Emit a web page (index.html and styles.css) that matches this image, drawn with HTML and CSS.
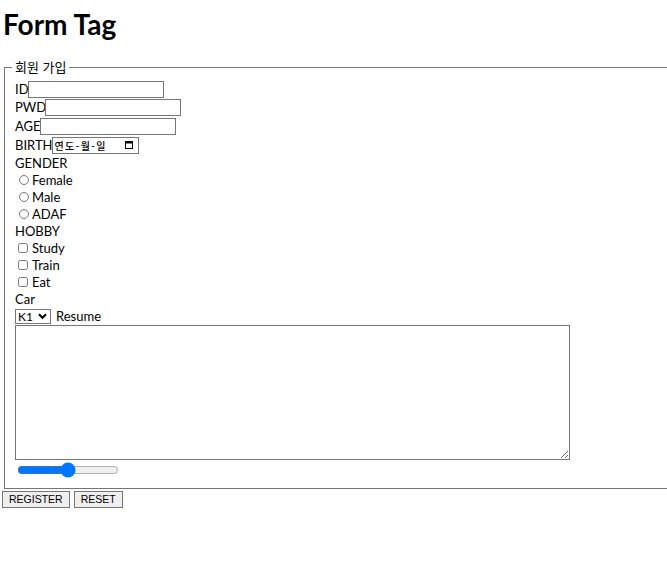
FILE: index.html
```html
<!DOCTYPE html>
<html lang="ko">
<head>
<meta charset="utf-8">
<title>Form Tag</title>
<link rel="stylesheet" href="styles.css">
</head>
<body>
<h1 class="title">Form Tag</h1>
<form class="form">
  <fieldset class="box">
    <legend class="legend">회원 가입</legend>
    <div class="line-in"><label class="lbl" for="id">ID</label><input class="text" id="id" type="text"></div>
    <div class="line-in"><label class="lbl" for="pwd">PWD</label><input class="text" id="pwd" type="password"></div>
    <div class="line-in"><label class="lbl" for="age">AGE</label><input class="text" id="age" type="text"></div>
    <div class="line-in"><label class="lbl">BIRTH</label><div class="date"><span class="date-text">연도-월-일</span><svg class="cal" width="8" height="8" viewBox="0 0 8 8"><rect x="0.5" y="0.5" width="7" height="7" fill="none" stroke="#000" stroke-width="1"/><rect x="0" y="0" width="8" height="2.5" fill="#000"/></svg></div></div>
    <div class="line">GENDER</div>
    <label class="line"><input class="radio" type="radio" name="g">Female</label>
    <label class="line"><input class="radio" type="radio" name="g">Male</label>
    <label class="line"><input class="radio" type="radio" name="g">ADAF</label>
    <div class="line">HOBBY</div>
    <label class="line"><input class="check" type="checkbox">Study</label>
    <label class="line"><input class="check" type="checkbox">Train</label>
    <label class="line"><input class="check" type="checkbox">Eat</label>
    <div class="line">Car</div>
    <div class="line-sel"><span class="sel-wrap"><select class="sel"><option>K1</option><option>K3</option><option>K5</option></select><svg class="chev" width="9" height="7" viewBox="0 0 9 7"><path d="M1 1.3 L4.5 4.8 L8 1.3" fill="none" stroke="#000" stroke-width="2.1"/></svg></span><span class="resume">Resume</span></div>
    <textarea class="area"></textarea>
    <input class="range" type="range" min="0" max="100" value="50">
  </fieldset>
  <div class="buttons">
    <button class="btn" type="submit">REGISTER</button>
    <button class="btn" type="reset">RESET</button>
  </div>
</form>
</body>
</html>
```
FILE: styles.css
```css
html, body {
  margin: 0;
  padding: 0;
}
body {
  padding: 0 0 0 2px;
  font-family: Lato, "Noto Sans CJK KR", sans-serif;
  font-size: 13px;
  color: #000;
  background: #fff;
  overflow: hidden;
}
.title {
  font-family: Lato, sans-serif;
  font-weight: 700;
  font-size: 28px;
  line-height: 34px;
  margin: 7px 0 17px 1px;
}
.form {
  margin: 0;
}
.box {
  margin: 0 0 0 2px;
  border: 1px solid #767676;
  border-right: 0;
  padding: 4px 10px 10px 10px;
  min-width: 0;
}
.legend {
  font-family: "Noto Sans CJK KR", Lato, sans-serif;
  font-size: 13px;
  line-height: 18px;
  padding: 0 3px;
  margin-left: -3px;
}
.line-in {
  height: 18.67px;
  display: flex;
  align-items: center;
}
.line {
  height: 17px;
  display: flex;
  align-items: center;
  line-height: 17px;
}
.lbl {
  line-height: 17px;
  margin-right: -1px;
}
.text {
  box-sizing: border-box;
  width: 136px;
  height: 17px;
  margin: 0;
  padding: 0 2px;
  border: 1px solid #767676;
  border-radius: 0;
  font-size: 11px;
}
.date {
  box-sizing: border-box;
  width: 87px;
  height: 17px;
  border: 1px solid #767676;
  display: flex;
  align-items: center;
  padding: 0 5px 0 2px;
}
.date-text {
  font-family: "Noto Sans CJK KR", sans-serif;
  font-size: 10px;
  font-weight: 500;
  letter-spacing: 1.4px;
  line-height: 15px;
  flex: 1;
}
.cal {
  display: block;
}
.radio {
  width: 10px;
  height: 10px;
  margin: 0 3px 0 4px;
}
.check {
  width: 10px;
  height: 10px;
  margin: 0 4px 0 3px;
}
.line-sel {
  height: 17.33px;
  display: flex;
  align-items: center;
}
.sel-wrap {
  position: relative;
  display: block;
  width: 36px;
  height: 15px;
}
.sel {
  -webkit-appearance: none;
  appearance: none;
  box-sizing: border-box;
  display: block;
  width: 36px;
  height: 15px;
  margin: 0;
  padding: 0 0 0 2px;
  border: 1px solid #767676;
  border-radius: 0;
  font-family: Lato, sans-serif;
  font-size: 12px;
  line-height: 13px;
  background: #fff;
  color: #000;
}
.chev {
  position: absolute;
  right: 4px;
  top: 4px;
  pointer-events: none;
}
.resume {
  margin-left: 5px;
}
.area {
  display: block;
  box-sizing: border-box;
  width: 555px;
  height: 135px;
  margin: 0;
  border: 1px solid #767676;
  border-radius: 0;
  resize: both;
}
.range {
  display: block;
  width: 102px;
  height: 16px;
  margin: 2px 0 0 2px;
}
.buttons {
  display: flex;
  gap: 4px;
  margin-top: 2px;
}
.btn {
  box-sizing: border-box;
  height: 17px;
  margin: 0;
  padding: 0 6px;
  border: 1px solid #767676;
  border-radius: 0;
  background: #efefef;
  font-family: "Liberation Sans", Arial, sans-serif;
  font-size: 10.5px;
  line-height: 15px;
  color: #000;
}
```
